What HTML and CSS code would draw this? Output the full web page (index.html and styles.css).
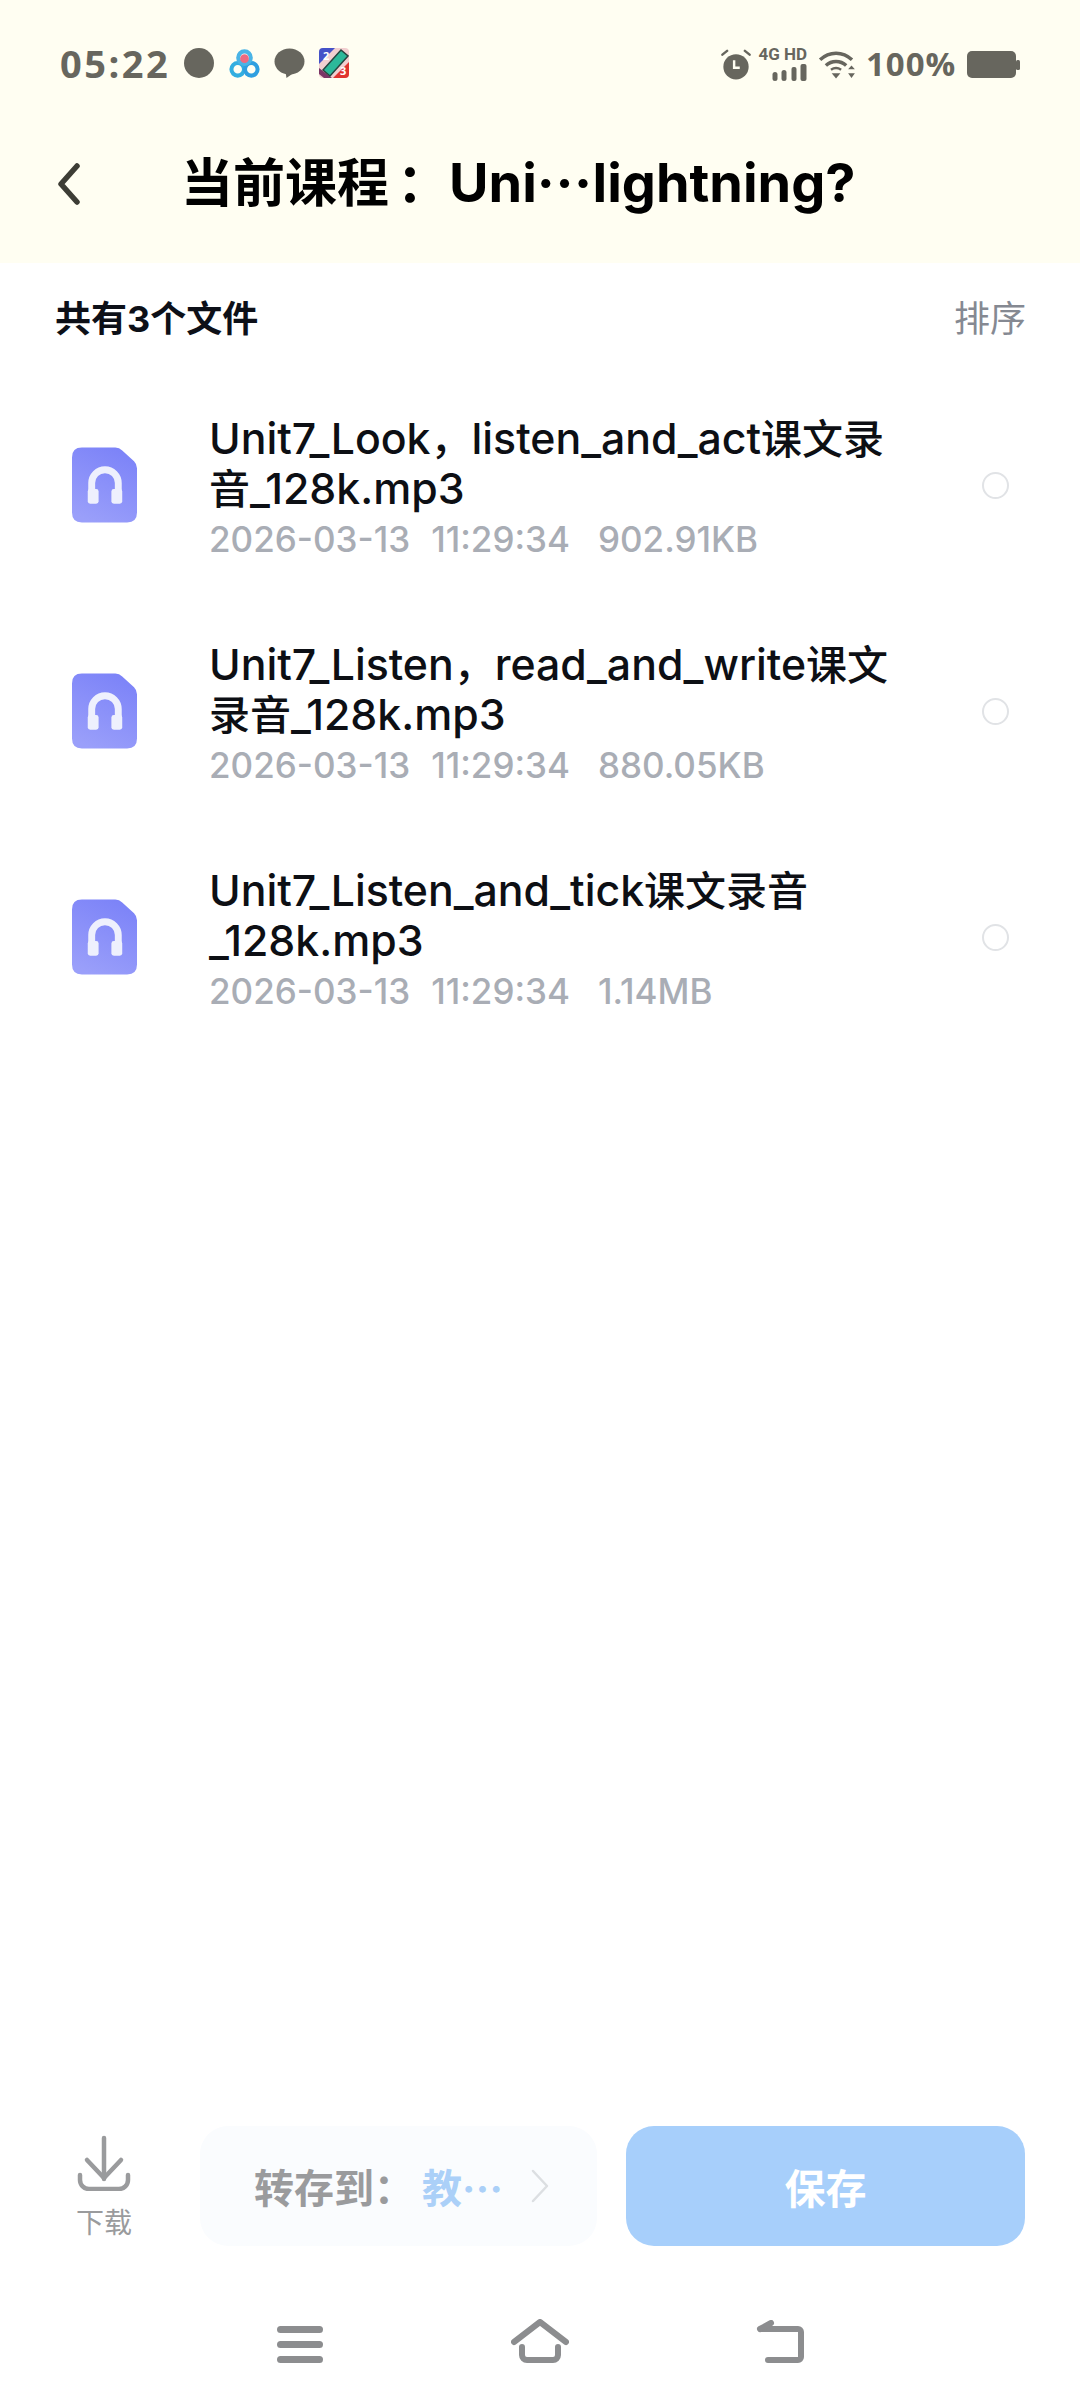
FILE: index.html
```html
<!DOCTYPE html>
<html lang="zh-CN">
<head>
<meta charset="utf-8">
<title>当前课程</title>
<link rel="stylesheet" href="styles.css">
</head>
<body>
<div class="page">
  <header class="top">
    <div class="status">
      <div class="status-left">
        <span class="time">05:22</span>
        <svg class="si si-dot" width="30" height="30" viewBox="0 0 30 30"><circle cx="15" cy="15" r="15" fill="#67665e"/></svg>
        <svg class="si si-maps" width="31" height="31" viewBox="0 0 32 32"><g fill="none" stroke-width="4.200"><circle cx="9" cy="22" r="6.500" stroke="#33aee0"/><circle cx="23" cy="22" r="6.500" stroke="#2f9fe0"/><circle cx="16" cy="10" r="6.500" stroke="#4ab4e6"/></g><circle cx="16" cy="11" r="4.500" fill="#ee6a80"/></svg>
        <svg class="si si-chat" width="31" height="30" viewBox="0 0 30 30"><ellipse cx="15" cy="13.500" rx="15" ry="13" fill="#67665e"/><path d="M11 24l1 6 7-5z" fill="#67665e"/></svg>
        <svg class="si si-app" width="30" height="30" viewBox="0 0 30 30"><rect width="30" height="30" rx="4" fill="#f2cfd0"/><path d="M0 4a4 4 0 0 1 4-4h12L0 16z" fill="#4552c8"/><path d="M30 14v12a4 4 0 0 1-4 4H14z" fill="#e0342f"/><path d="M0 26l5 4h8L0 20z" fill="#7b3566"/><path d="M4 22L22 2l7 6-18 20z" fill="#2cb89a" stroke="#26443f" stroke-width="1.500"/><text x="4" y="12" class="app-num">2</text><text x="21" y="27" class="app-num">3</text></svg>
      </div>
      <div class="status-right">
        <svg width="30" height="32" viewBox="0 0 32 34"><circle cx="16" cy="20" r="13.500" fill="#67665e"/><path d="M14 13v8h6" fill="none" stroke="#fffef2" stroke-width="2.600"/><path d="M1.500 7l5-4M30.500 7l-5-4" stroke="#67665e" stroke-width="2.600" stroke-linecap="round"/></svg>
        <div class="net">
          <span class="net-label">4G HD</span>
          <svg width="35" height="17" viewBox="0 0 34 17"><g fill="#67665e"><rect x="0" y="8" width="5" height="9" rx="2.500"/><rect x="9" y="6" width="5" height="11" rx="2.500"/><rect x="19" y="3" width="5" height="14" rx="2"/><rect x="28" y="0" width="6" height="17" rx="2"/></g></svg>
        </div>
        <svg class="wifi" width="38" height="29" viewBox="0 0 38 30"><g fill="none" stroke="#67665e" stroke-width="3.600"><path d="M1.500 10C11 1 25 1 34.500 10"/><path d="M7.500 16c6-5.500 15-5.500 21 0"/></g><path d="M12 19.500c4-3 8-3 12 0l-1.500 2c-3-2-6-2-9 0z" fill="#67665e"/><path d="M13.500 24h9L18 29.500z" fill="#67665e"/><path d="M31 20h7l-3.500-4zM31 24h7l-3.500 5z" fill="#67665e" transform="translate(-0.500 0)"/></svg>
        <span class="batt-text">100%</span>
        <svg class="batt" width="53" height="27" viewBox="0 0 53 27"><rect width="49" height="27" rx="5" fill="#67665e"/><rect x="49" y="9" width="4" height="10" rx="1.500" fill="#67665e"/></svg>
      </div>
    </div>
    <div class="titlebar">
      <svg class="back" width="24" height="42" viewBox="0 0 24 42"><path d="M20 3L4 21l16 18" fill="none" stroke="#3d3d35" stroke-width="5.500" stroke-linecap="round" stroke-linejoin="round"/></svg>
      <h1 class="title"><span class="title-cjk">当前课程<span class="colon">：</span></span>Uni<span class="dots">···</span>lightning?</h1>
    </div>
  </header>

  <main class="content">
    <div class="list-head">
      <span class="count">共有3个文件</span>
      <span class="sort">排序</span>
    </div>
    <ul class="files">
      <li class="file">
        <svg class="file-icon" width="65" height="76" viewBox="0 0 66 76"><use href="#audio"/></svg>
        <div class="file-body">
          <div class="file-name">Unit7_Look<span class="cjk">，</span>listen_and_act<span class="cjk">课文录音</span>_128k.mp3</div>
          <div class="file-meta"><span>2026-03-13</span><span>11:29:34</span><span>902.91KB</span></div>
        </div>
        <span class="radio"></span>
      </li>
      <li class="file">
        <svg class="file-icon" width="65" height="76" viewBox="0 0 66 76"><use href="#audio"/></svg>
        <div class="file-body">
          <div class="file-name">Unit7_Listen<span class="cjk">，</span>read_and_write<span class="cjk">课文录音</span>_128k.mp3</div>
          <div class="file-meta"><span>2026-03-13</span><span>11:29:34</span><span>880.05KB</span></div>
        </div>
        <span class="radio"></span>
      </li>
      <li class="file">
        <svg class="file-icon" width="65" height="76" viewBox="0 0 66 76"><use href="#audio"/></svg>
        <div class="file-body">
          <div class="file-name">Unit7_Listen_and_tick<span class="cjk">课文录音</span><br>_128k.mp3</div>
          <div class="file-meta"><span>2026-03-13</span><span>11:29:34</span><span>1.14MB</span></div>
        </div>
        <span class="radio"></span>
      </li>
    </ul>
  </main>

  <div class="actions">
    <div class="download">
      <svg width="54" height="56" viewBox="0 0 54 56"><g fill="none" stroke="#9a9b9d" stroke-width="4.500" stroke-linecap="round" stroke-linejoin="round"><path d="M27 3v41"/><path d="M10 25l17 18 17-18"/><path d="M3 40v5a9 9 0 0 0 9 9h30a9 9 0 0 0 9-9v-5"/></g></svg>
      <span class="download-label">下载</span>
    </div>
    <div class="saveto">
      <span class="saveto-label">转存到：</span><span class="saveto-value">教<span class="dots">···</span></span>
      <svg class="saveto-arrow" width="18" height="34" viewBox="0 0 18 34"><path d="M2 2l14 15L2 32" fill="none" stroke="#dcdfe2" stroke-width="2.500" stroke-linecap="round" stroke-linejoin="round"/></svg>
    </div>
    <button class="save">保存</button>
  </div>

  <nav class="navbar">
    <span class="nav-item"><svg width="46" height="37" viewBox="0 0 46 37"><g fill="#8c8d8f"><rect x="0" y="0" width="46" height="7" rx="3.500"/><rect x="0" y="15" width="46" height="7" rx="3.500"/><rect x="0" y="30" width="46" height="7" rx="3.500"/></g></svg></span>
    <span class="nav-item"><svg width="58" height="44" viewBox="0 0 58 44"><g fill="none" stroke="#8c8d8f" stroke-width="6" stroke-linecap="round" stroke-linejoin="round"><path d="M3 23L29 3l26 20"/><path d="M11 28v8a5 5 0 0 0 5 5h26a5 5 0 0 0 5-5v-8"/></g></svg></span>
    <span class="nav-item"><svg width="48" height="43" viewBox="0 0 48 43"><g fill="none" stroke="#8c8d8f" stroke-width="6" stroke-linecap="round" stroke-linejoin="round"><path d="M5 9h37a3 3 0 0 1 3 3v25a3 3 0 0 1-3 3H12"/><path d="M15 3L4 9"/></g></svg></span>
  </nav>
</div>

<svg class="defs" width="0" height="0">
  <defs>
    <linearGradient id="audio-fill" x1="0.700" y1="0" x2="0.300" y2="1">
      <stop offset="0" stop-color="#7c83f8"/>
      <stop offset="1" stop-color="#9a9ffa"/>
    </linearGradient>
    <g id="audio">
      <path d="M10 0h34q4 0 7 3l12 11q3 3 3 7v45q0 10-10 10H10Q0 76 0 66V10Q0 0 10 0z" fill="url(#audio-fill)"/>
      <path d="M20 50V36a13.500 13.500 0 0 1 27 0v14" fill="none" stroke="#eef0fd" stroke-width="7"/>
      <rect x="16" y="42" width="11" height="15" rx="2.500" fill="#eef0fd"/>
      <rect x="40" y="42" width="11" height="15" rx="2.500" fill="#eef0fd"/>
    </g>
  </defs>
</svg>
</body>
</html>
```

FILE: styles.css
```css
* { box-sizing: border-box; }
html, body { margin: 0; padding: 0; background: #fff; }
body { font-family: "Inter", "Noto Sans CJK SC", sans-serif; color: #0d0f14; }
.page { width: 1080px; height: 2408px; display: flex; flex-direction: column; overflow: hidden; }
.defs { position: absolute; }

.top { height: 263px; background: #fffef2; flex: none; }
.status { height: 92px; padding: 45px 60px 0 60px; display: flex; justify-content: space-between; align-items: flex-start; }
.status-left { display: flex; align-items: center; height: 36px; }
.time { font-family: "Open Sans", sans-serif; font-weight: 700; font-size: 38px; line-height: 36px; color: #67665e; letter-spacing: 2.500px; width: 124px; white-space: nowrap; }
.si-maps { margin-left: 15px; }
.si-chat { margin-left: 14px; }
.si-app { margin-left: 14px; }
.app-num { font-family: "Open Sans", sans-serif; font-weight: 700; font-size: 11px; fill: #fff; }
.status-right { display: flex; align-items: center; height: 36px; margin-top: 1px; }
.net { display: flex; flex-direction: column; align-items: flex-end; gap: 3px; width: 47px; margin-left: 9px; }
.net-label { font-family: "Roboto", sans-serif; font-weight: 700; font-size: 17px; line-height: 14px; color: #67665e; white-space: nowrap; }
.wifi { margin-left: 11px; }
.batt-text { font-family: "Open Sans", sans-serif; font-weight: 700; font-size: 33px; line-height: 36px; letter-spacing: 1px; color: #67665e; margin-left: 10px; width: 92px; white-space: nowrap; }
.batt { margin-left: 9px; }

.titlebar { height: 171px; padding: 12px 0 0 57px; display: flex; align-items: center; }
.back { flex: none; }
.title { margin: 0 0 0 100px; font-size: 54px; line-height: 60px; font-weight: 700; color: #000; white-space: nowrap; }
.title-cjk { font-size: 52px; }
.colon { padding-left: 8px; }
.dots { letter-spacing: 0.010em; }

.content { flex: 1; min-height: 0; }
.list-head { display: flex; justify-content: space-between; align-items: center; padding: 0 54px 0 55px; height: 109px; }
.count { font-size: 36px; line-height: 44px; font-weight: 700; color: #0d1018; margin-top: 2px; }
.sort { font-size: 36px; line-height: 44px; color: #858992; margin-top: 2px; }

.files { list-style: none; margin: 0; padding: 0; }
.file { display: flex; align-items: center; height: 226px; padding: 0 71px 0 72px; }
.file-icon { flex: none; }
.file-body { width: 690px; margin-left: 72px; padding-top: 7px; }
.file-name { font-size: 42.800px; line-height: 50px; font-weight: 450; color: #0d0f14; }
.cjk { font-size: 41px; }
.file-meta { display: flex; gap: 21px; font-size: 35px; line-height: 50px; font-weight: 450; color: #a9adb5; }
.file-meta span:last-child { margin-left: 7px; }
.radio { margin-left: auto; width: 27px; height: 27px; border: 2.500px solid #e1e3e6; border-radius: 50%; }

.actions { flex: none; display: flex; align-items: center; height: 120px; padding: 0 54px 0 77px; }
.download { width: 54px; display: flex; flex-direction: column; align-items: center; padding-top: 4px; }
.download-label { font-size: 28px; line-height: 36px; color: #9a9b9d; white-space: nowrap; margin-top: 14px; }
.saveto { width: 397px; height: 120px; margin-left: 69px; border-radius: 28px; background: #fafcfe; display: flex; align-items: center; padding-left: 54px; }
.saveto-label { font-size: 40px; font-weight: 700; color: #9a9b9d; white-space: nowrap; }
.saveto-value { font-size: 40px; font-weight: 700; color: #abd0f8; white-space: nowrap; margin-left: 8px; }
.saveto-arrow { margin-left: 28px; flex: none; }
.save { width: 399px; height: 120px; margin-left: 29px; border: 0; border-radius: 28px; background: #a7cffb; color: #fff; font-family: inherit; font-size: 41px; font-weight: 700; }

.navbar { flex: none; height: 162px; display: flex; justify-content: center; align-items: flex-end; padding-bottom: 45px; }
.nav-item { width: 240px; display: flex; justify-content: center; }
```
